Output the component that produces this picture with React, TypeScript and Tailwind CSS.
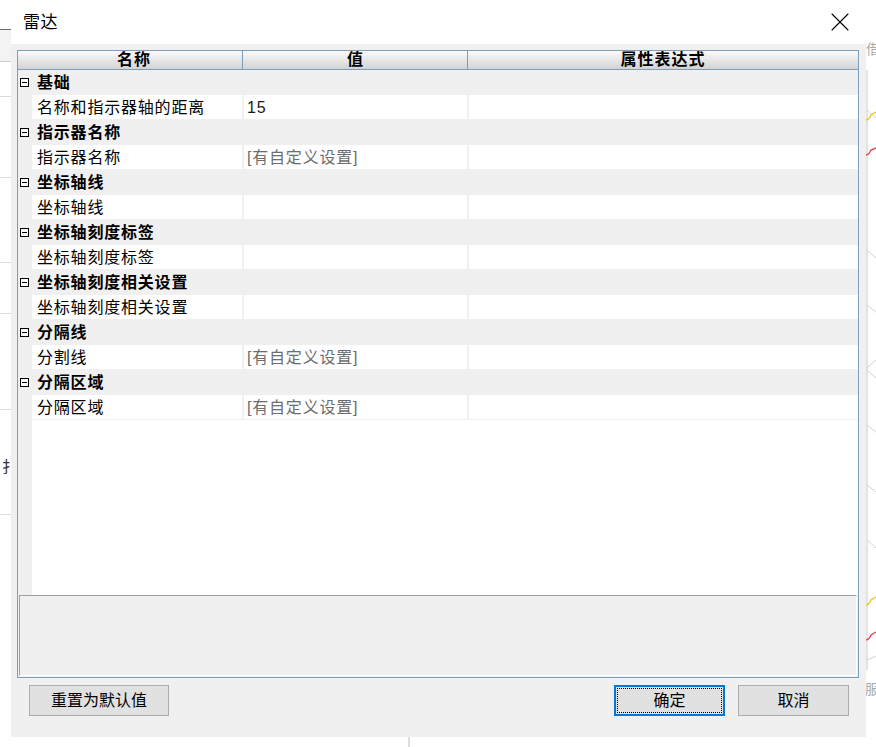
import { X } from 'lucide-react';

type Row =
  | { kind: 'cat'; label: string }
  | { kind: 'item'; label: string; value?: string; custom?: boolean };

const ROWS: Row[] = [
  { kind: 'cat', label: '基础' },
  { kind: 'item', label: '名称和指示器轴的距离', value: '15' },
  { kind: 'cat', label: '指示器名称' },
  { kind: 'item', label: '指示器名称', custom: true },
  { kind: 'cat', label: '坐标轴线' },
  { kind: 'item', label: '坐标轴线' },
  { kind: 'cat', label: '坐标轴刻度标签' },
  { kind: 'item', label: '坐标轴刻度标签' },
  { kind: 'cat', label: '坐标轴刻度相关设置' },
  { kind: 'item', label: '坐标轴刻度相关设置' },
  { kind: 'cat', label: '分隔线' },
  { kind: 'item', label: '分割线', custom: true },
  { kind: 'cat', label: '分隔区域' },
  { kind: 'item', label: '分隔区域', custom: true },
];

const FONT = { fontFamily: '"Liberation Sans", "Noto Sans CJK SC", sans-serif' };

function Minus() {
  return (
    <span className="w-[9px] h-[9px] border border-black flex items-center justify-center bg-white">
      <span className="w-[5px] h-px bg-black" />
    </span>
  );
}

function Backdrop() {
  return (
    <>
      {/* left strip of the app behind */}
      <div className="absolute left-0 top-[29px] w-[11px] h-[33px] bg-[#f3f3f3] border-t border-[#6a6a6a] border-b border-b-[#cfcfcf]" />
      {[96, 177, 262, 313, 409, 514].map((y) => (
        <div key={y} className="absolute left-0 w-[11px] h-px bg-[#dcdcdc]" style={{ top: y }} />
      ))}
      <div className="absolute left-[2px] top-[459px] text-[15px] text-[#333] leading-none" style={FONT}>扌</div>
      {/* bottom edge */}
      <div className="absolute left-[408px] top-[737px] w-[2px] h-[10px] bg-[#dedede]" />
      {/* right side */}
      <div className="absolute left-[866px] top-[42px] w-[10px] overflow-hidden text-[14px] text-[#aaa] leading-none" style={FONT}>借</div>
      <div className="absolute left-[865px] top-[682px] w-[11px] overflow-hidden text-[14px] text-[#aaa] leading-none" style={FONT}>服</div>
      <svg className="absolute left-[866px] top-[60px]" width="10" height="620" viewBox="0 0 10 620">
        <line x1="1" y1="10" x2="1" y2="610" stroke="#c8c8c8" />
        <path d="M1 50 L10 58 M1 190 L10 198 M1 245 L10 252 M1 308 L10 300 M1 310 L10 318 M1 365 L10 372 M1 425 L10 432 M1 480 L10 488 M1 600 L10 596" stroke="#d2d2d2" fill="none" />
        <path d="M0 60 C3 60 4 57 5 55 L10 52" stroke="#f0c020" strokeWidth="1.4" fill="none" />
        <path d="M0 95 C3 95 4 92 5 90 L10 88" stroke="#e84050" strokeWidth="1.4" fill="none" />
        <path d="M0 545 C3 545 4 542 5 540 L10 537" stroke="#f0c020" strokeWidth="1.4" fill="none" />
        <path d="M0 580 C3 580 4 577 5 575 L10 572" stroke="#e84050" strokeWidth="1.4" fill="none" />
      </svg>
    </>
  );
}

function GridRow({ row }: { row: Row }) {
  if (row.kind === 'cat') {
    return (
      <div className="h-[25px] flex items-center bg-[#f0f0f0]">
        <div className="w-[14px] pl-[2px] flex items-center">
          <Minus />
        </div>
        <span className="pl-[5px] pt-px font-bold text-[16px] tracking-[0.8px] leading-none text-black">{row.label}</span>
      </div>
    );
  }
  return (
    <div className="h-[25px] flex bg-[#f0f0f0]">
      <div className="w-[14px]" />
      <div className="flex-1 flex bg-white border-b border-[#f0f0f0]">
        <div className="w-[210px] flex items-center pl-[5px] pt-px text-[16px] tracking-[0.8px] leading-none text-black">
          {row.label}
        </div>
        <div className="w-[225px] border-l-2 border-[#f0f0f0] flex items-center pl-[3px] pt-px text-[16px] tracking-[0.8px] leading-none">
          {row.value && <span className="text-[#1a1a1a]">{row.value}</span>}
          {row.custom && <span className="text-[#6d6d6d]">[有自定义设置]</span>}
        </div>
        <div className="flex-1 border-l-2 border-[#f0f0f0]" />
      </div>
    </div>
  );
}

export default function App() {
  return (
    <div className="relative w-[876px] h-[747px] bg-white overflow-hidden" style={FONT}>
      <Backdrop />

      <div className="absolute left-[11px] top-0 w-[855px] h-[737px] flex flex-col bg-[#f0f0f0]">
        {/* title bar */}
        <div className="h-[44px] bg-white flex items-center justify-between pl-[12px] pr-[10px]">
          <span className="text-[17px] tracking-[0.6px] text-black leading-none">雷达</span>
          <X className="w-[32px] h-[32px] text-black" strokeWidth={0.8} />
        </div>

        {/* property grid */}
        <div className="mt-[6px] ml-[6px] w-[842px] h-[628px] border border-[#7f9db9] flex flex-col bg-[#f0f0f0]">
          <div className="h-[19px] flex border-b border-[#7f9db9] bg-gradient-to-b from-[#fbfbfb] to-[#d3d3d3] font-bold text-[16px] leading-none text-black">
            <div className="w-[224px] pl-[8px] flex items-center justify-center tracking-[1px]">名称</div>
            <div className="w-[225px] border-l border-[#7f9db9] flex items-center justify-center">值</div>
            <div className="flex-1 border-l border-[#7f9db9] flex items-center justify-center tracking-[1px]">属性表达式</div>
          </div>

          <div className="flex-1 flex flex-col">
            {ROWS.map((r, i) => (
              <GridRow key={i} row={r} />
            ))}
            <div className="flex-1 flex">
              <div className="w-[14px]" />
              <div className="flex-1 bg-white" />
            </div>
          </div>

          <div className="h-[81px] mx-px mb-px border-t border-l border-[#a0a0a0] border-r border-b border-r-white border-b-white bg-[#f0f0f0]" />
        </div>

        {/* buttons */}
        <div className="mt-[7px] flex items-start text-[16px] leading-none text-black">
          <button className="ml-[18px] w-[140px] h-[31px] bg-[#e1e1e1] border border-[#adadad] flex items-center justify-center">
            重置为默认值
          </button>
          <button className="ml-auto w-[111px] h-[31px] bg-[#e1e1e1] border-2 border-[#0078d7] p-px flex">
            <span className="flex-1 border border-dotted border-black flex items-center justify-center">确定</span>
          </button>
          <button className="ml-[13px] mr-[17px] w-[111px] h-[31px] bg-[#e1e1e1] border border-[#adadad] flex items-center justify-center">
            取消
          </button>
        </div>
      </div>
    </div>
  );
}
